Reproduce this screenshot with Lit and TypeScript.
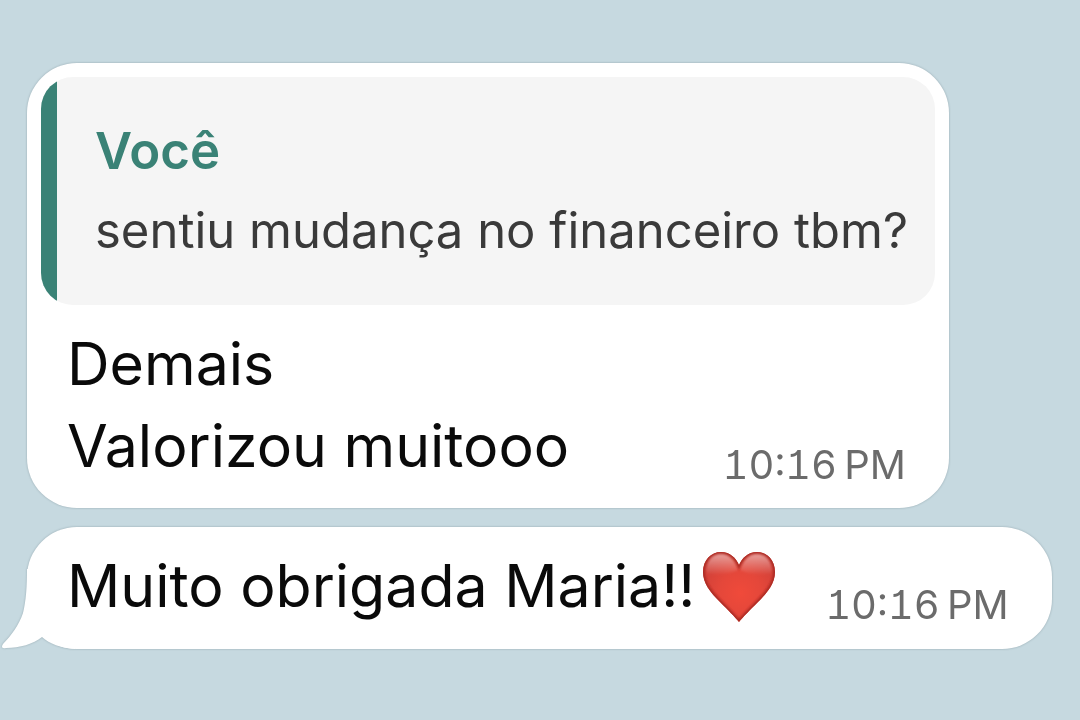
import { LitElement, html, css, svg, nothing } from "lit";
import { customElement, property } from "lit/decorators.js";

const heart = html`<svg class="heart" viewBox="0 0 72 72" role="img" aria-label="❤️">
  <defs>
    <radialGradient id="body" cx="0.52" cy="0.6" r="0.6">
      <stop offset="0" stop-color="#f04a3a" />
      <stop offset="0.5" stop-color="#e4473a" />
      <stop offset="1" stop-color="#cf4038" />
    </radialGradient>
    <linearGradient id="shine" x1="0" y1="0" x2="0" y2="1">
      <stop offset="0" stop-color="#fff" stop-opacity="0.5" />
      <stop offset="1" stop-color="#fff" stop-opacity="0" />
    </linearGradient>
    <clipPath id="edge"><path d="M36 72C32 67 25 60 17 52C7 42 0 33 0 22C0 10 8 2 18 2C27 2 33 8 36 15C39 8 45 2 54 2C64 2 72 10 72 22C72 33 65 42 55 52C47 60 40 67 36 72Z" /></clipPath>
    <filter id="soft" x="-10%" y="-10%" width="120%" height="120%"><feGaussianBlur stdDeviation="1" /></filter>
  </defs>
  <g clip-path="url(#edge)">
    <rect width="72" height="72" fill="url(#body)" />
    <path d="M36 72C32 67 25 60 17 52C7 42 0 33 0 22C0 10 8 2 18 2C27 2 33 8 36 15C39 8 45 2 54 2C64 2 72 10 72 22C72 33 65 42 55 52C47 60 40 67 36 72Z"
      fill="none" stroke="#ab2a22" stroke-width="4" filter="url(#soft)" />
    <path d="M3 23C3 11 9 4 18 4C26 4 32 10 35 20C26 24 12 27 3 23Z" fill="url(#shine)" filter="url(#soft)" />
    <path d="M69 23C69 11 63 4 54 4C46 4 40 10 37 20C46 24 60 27 69 23Z" fill="url(#shine)" filter="url(#soft)" />
  </g>
</svg>`;

@customElement("chat-bubble")
class ChatBubble extends LitElement {
  @property() time = "";
  @property() author = "";
  @property() quoted = "";
  @property({ type: Boolean }) tail = false;
  @property({ type: Boolean }) love = false;
  @property({ attribute: false }) lines: string[] = [];

  static styles = css`
    :host {
      display: block;
      position: relative;
      width: fit-content;
      filter: drop-shadow(0 0 1px rgba(60, 80, 90, 0.35));
    }
    .bubble {
      background: #fff;
      border-radius: 50px;
      padding: 14px;
    }
    .quote {
      display: flex;
      margin: 0 0 18px;
      border-radius: 32px;
      overflow: hidden;
      background: #f5f5f5;
    }
    .quote::before {
      content: "";
      width: 16px;
      flex: none;
      background: #3a8276;
    }
    .quoted {
      padding: 35px 27px 33px 38px;
    }
    .author {
      margin: 0;
      font-size: 51px;
      line-height: 78px;
      font-weight: 600;
      color: #3a8276;
    }
    .source {
      margin: 0;
      font-size: 49px;
      line-height: 82px;
      color: #3a3a3a;
    }
    .content {
      display: flex;
      justify-content: space-between;
      align-items: flex-end;
      gap: 50px;
      padding: 0 29px 0 26px;
    }
    .text {
      margin: 0;
      font-size: 59px;
      line-height: 82px;
      color: #0a0a0a;
      white-space: nowrap;
    }
    .line {
      display: flex;
      align-items: center;
      gap: 8px;
    }
    .with-quote {
      padding-bottom: 7px;
    }
    .plain {
      padding: 4px 0 8px;
    }
    time {
      font-size: 40px;
      line-height: 44px;
      font-feature-settings: "tnum", "cv01";
      color: #6b6b6b;
      white-space: nowrap;
    }
    .heart {
      width: 72px;
      height: 72px;
      flex: none;
    }
    .tail {
      position: absolute;
      left: -27px;
      bottom: 0;
      width: 76px;
      height: 80px;
    }
  `;

  render() {
    return html`
      <div class="bubble">
        ${this.quoted
          ? html`<blockquote class="quote">
              <div class="quoted">
                <p class="author">${this.author}</p>
                <p class="source">${this.quoted}</p>
              </div>
            </blockquote>`
          : nothing}
        <div class=${this.quoted ? "with-quote" : "plain"}>
          <div class="content">
            <p class="text">
              ${this.lines.map(
                (line) => html`<span class="line">${line}${this.love ? heart : nothing}</span>`
              )}
            </p>
            <time>${this.time}</time>
          </div>
        </div>
      </div>
      ${this.tail
        ? html`<svg class="tail" viewBox="0 0 76 80" aria-hidden="true">
            ${svg`<path fill="#fff" d="M27 0C27 18 26 32 23 44C19 56 11 67 3 75C1 78 2 80 6 79C20 79 33 75 42 68C50 75 60 79 76 80L56 56L40 0Z" />`}
          </svg>`
        : nothing}
    `;
  }
}

@customElement("app-root")
class AppRoot extends LitElement {
  static styles = css`
    :host {
      display: block;
      box-sizing: border-box;
      min-height: 100vh;
      padding: 63px 27px;
      background: #c6d9e0;
      font-family: Inter, "Liberation Sans", sans-serif;
    }
    .thread {
      display: flex;
      flex-direction: column;
      align-items: flex-start;
      gap: 19px;
    }
  `;

  render() {
    return html`<main class="thread">
      <chat-bubble
        author="Você"
        quoted="sentiu mudança no financeiro tbm?"
        .lines=${["Demais", "Valorizou muitooo"]}
        time=${"10:16\u202fPM"}
      ></chat-bubble>
      <chat-bubble tail love .lines=${["Muito obrigada Maria!!"]} time=${"10:16\u202fPM"}></chat-bubble>
    </main>`;
  }
}
